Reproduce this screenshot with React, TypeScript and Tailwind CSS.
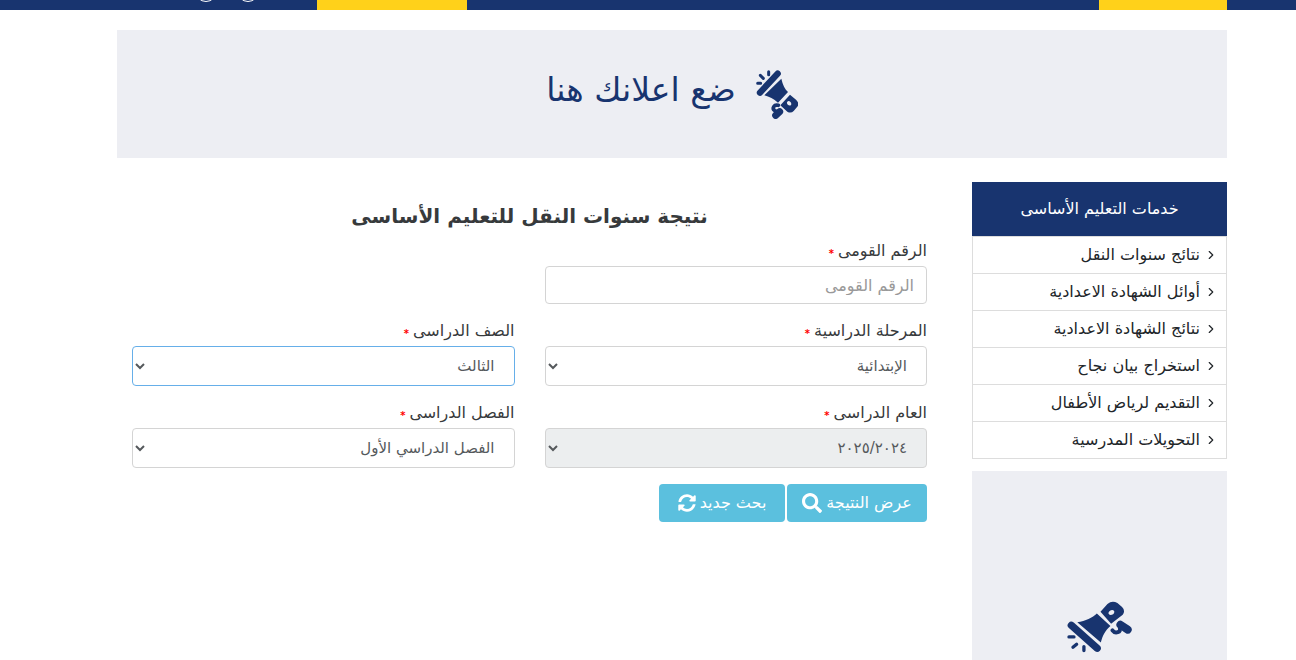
import React, { useState } from "react";
import { FaSearch, FaSyncAlt } from "react-icons/fa";
import { FiChevronRight } from "react-icons/fi";

const services = [
  "نتائج سنوات النقل",
  "أوائل الشهادة الاعدادية",
  "نتائج الشهادة الاعدادية",
  "استخراج بيان نجاح",
  "التقديم لرياض الأطفال",
  "التحويلات المدرسية",
];

const stages = ["الإبتدائية", "الإعدادية"];
const grades = ["الأول", "الثاني", "الثالث", "الرابع", "الخامس", "السادس"];
const terms = ["الفصل الدراسي الأول", "الفصل الدراسي الثاني"];

function MegaphoneDown() {
  return (
    <svg viewBox="42 28 126 147" className="h-[49px] w-[42px]" aria-hidden="true">
      <g fill="none" stroke="#18346f" strokeLinecap="round">
        <path d="M54 96L107 39" strokeWidth="19" />
        <path d="M47 68h9M55 44l9 9M80 33v9" strokeWidth="9" />
        <path d="M109 134C96 130 89 143 98 150l10 4" strokeWidth="11" />
        <path d="M101 164L113 153" strokeWidth="21" />
      </g>
      <path d="M67 104L118 54C122 73 129 85 138 94L108 126C95 115 82 108 67 104Z" fill="#18346f" />
      <path
        fillRule="evenodd"
        d="M144 102L162 117Q172 126 167 137L155 151Q147 159 136 153L115 134ZM136 123C131 129 142 139 147 133C151 127 141 117 136 123Z"
        fill="#18346f"
      />
    </svg>
  );
}

function MegaphoneUp() {
  return (
    <svg viewBox="51 34 196 156" className="h-[52px] w-[65px]" aria-hidden="true">
      <g fill="none" stroke="#18346f" strokeLinecap="round">
        <path d="M64 107L142 176" strokeWidth="22" />
        <path d="M57 142h15M69 173l11-9M102 171v12" strokeWidth="10" />
        <path d="M188 122C196 133 216 129 210 113" strokeWidth="12" />
        <path d="M212 105L234 120" strokeWidth="24" />
      </g>
      <path d="M82 98C107 93 128 84 141 71L182 109C166 122 158 139 153 159Z" fill="#18346f" />
      <path
        fillRule="evenodd"
        d="M152 66L173 43Q187 31 203 40L217 52Q228 63 219 75L184 102ZM177 73C182 81 197 71 193 64C188 56 172 66 177 73Z"
        fill="#18346f"
      />
    </svg>
  );
}

type FieldProps = {
  id: string;
  label: string;
  children: React.ReactNode;
};

function Field({ id, label, children }: FieldProps) {
  return (
    <div>
      <label htmlFor={id} className="flex h-[30px] items-center gap-1 text-base text-[#373a3c]">
        {label}
        <span className="pt-1 text-[10px] font-bold text-[#ff0000]">*</span>
      </label>
      {children}
    </div>
  );
}

const selectClass =
  "block h-10 w-full rounded border border-[#d4d4d4] bg-white px-[15px] text-[15px] text-[#55595c] focus:border-[#66afe9] focus:outline-none disabled:bg-[#eceeef] disabled:opacity-100";

export default function App() {
  const [nationalId, setNationalId] = useState("");
  const [stage, setStage] = useState(stages[0]);
  const [grade, setGrade] = useState(grades[2]);
  const [term, setTerm] = useState(terms[0]);

  const handleReset = () => {
    setNationalId("");
    setStage(stages[0]);
    setGrade(grades[2]);
    setTerm(terms[0]);
  };

  return (
    <div dir="rtl" lang="ar" className="h-screen overflow-hidden bg-white font-['DejaVu_Sans',sans-serif]">
      <header className="h-[10px] overflow-hidden bg-[#18346f] pr-[69px] pl-[117px]">
        <div className="flex h-full items-start">
          <div className="h-full w-32 bg-[#ffd11a]" />
          <div className="grow" />
          <div className="h-full w-[150px] bg-[#ffd11a]" />
          <div className="-mt-[20px] flex w-[200px] gap-5 pr-[58px]">
            <span className="size-[22px] rounded-full border border-white" />
            <span className="size-[22px] rounded-full border border-white" />
          </div>
        </div>
      </header>

      <div className="pt-5 pr-[69px] pl-[117px]">
        <div className="flex h-32 items-center justify-center gap-5 bg-[#edeef3] text-[#18346f]">
          <MegaphoneDown />
          <span className="pb-2 text-[33px] leading-10">ضع اعلانك هنا</span>
        </div>

        <div className="flex items-start gap-[45px] pt-6">
          <aside className="w-[255px] shrink-0">
            <h2 className="flex h-[54px] items-center justify-center bg-[#18346f] text-base text-white">
              خدمات التعليم الأساسى
            </h2>
            <ul className="border border-[#dddddd]">
              {services.map((service) => (
                <li key={service} className="border-b border-[#dddddd] last:border-b-0">
                  <a href="#" className="flex h-9 items-center gap-1 pr-2 text-base text-[#212529]">
                    <FiChevronRight className="size-[14px]" />
                    {service}
                  </a>
                </li>
              ))}
            </ul>
            <div className="mt-3 flex h-[312px] items-center justify-center bg-[#edeef3]">
              <MegaphoneUp />
            </div>
          </aside>

          <main className="grow pl-[15px]">
            <form onSubmit={(e) => e.preventDefault()}>
              <h1 className="pt-6 pb-[10px] text-center text-xl leading-5 font-bold text-[#373a3c]">
                نتيجة سنوات النقل للتعليم الأساسى
              </h1>
              <div className="grid grid-cols-2 gap-x-[30px] gap-y-3">
                <Field id="national-id" label="الرقم القومى">
                  <input
                    id="national-id"
                    type="text"
                    value={nationalId}
                    onChange={(e) => setNationalId(e.target.value)}
                    placeholder="الرقم القومى"
                    className="block h-[38px] w-full rounded border border-[#d4d4d4] px-3 text-base text-[#55595c] placeholder:text-[#999999] focus:border-[#66afe9] focus:outline-none"
                  />
                </Field>
                <div />
                <Field id="stage" label="المرحلة الدراسية">
                  <select id="stage" value={stage} onChange={(e) => setStage(e.target.value)} className={selectClass}>
                    {stages.map((s) => (
                      <option key={s}>{s}</option>
                    ))}
                  </select>
                </Field>
                <Field id="grade" label="الصف الدراسى">
                  <select
                    id="grade"
                    autoFocus
                    value={grade}
                    onChange={(e) => setGrade(e.target.value)}
                    className={selectClass}
                  >
                    {grades.map((g) => (
                      <option key={g}>{g}</option>
                    ))}
                  </select>
                </Field>
                <Field id="year" label="العام الدراسى">
                  <select id="year" disabled className={selectClass}>
                    <option>٢٠٢٥/٢٠٢٤</option>
                  </select>
                </Field>
                <Field id="term" label="الفصل الدراسى">
                  <select id="term" value={term} onChange={(e) => setTerm(e.target.value)} className={selectClass}>
                    {terms.map((t) => (
                      <option key={t}>{t}</option>
                    ))}
                  </select>
                </Field>
              </div>
              <div className="flex gap-[2px] pt-4">
                <button
                  type="submit"
                  className="flex h-[38px] w-[140px] items-center justify-center gap-1 rounded bg-[#5bc0de] text-base text-white"
                >
                  عرض النتيجة
                  <FaSearch className="size-5" />
                </button>
                <button
                  type="button"
                  onClick={handleReset}
                  className="flex h-[38px] w-[126px] items-center justify-center gap-1 rounded bg-[#5bc0de] text-base text-white"
                >
                  بحث جديد
                  <FaSyncAlt className="size-[18px]" />
                </button>
              </div>
            </form>
          </main>
        </div>
      </div>
    </div>
  );
}
